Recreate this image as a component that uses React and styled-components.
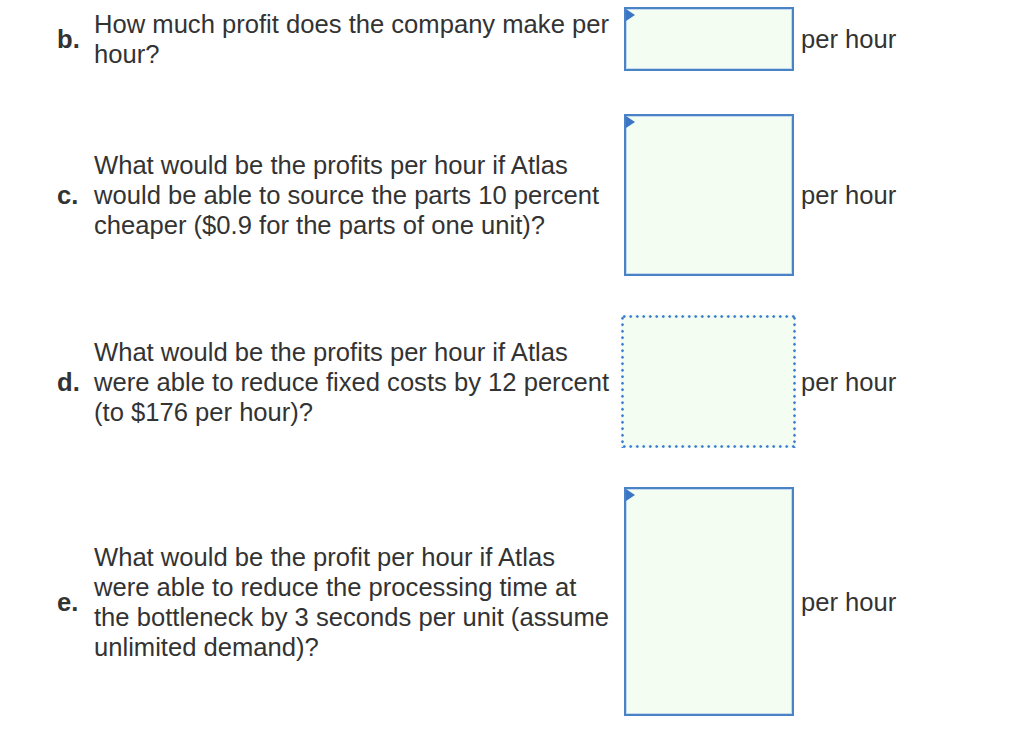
import React from 'react';
import styled, { createGlobalStyle } from 'styled-components';

// 기본 페이지 스타일
const GlobalStyle = createGlobalStyle`
  body {
    margin: 0;
    background: #ffffff;
    font-family: 'Liberation Sans', Arial, sans-serif;
    color: #333333;
  }
`;

// 문제 목록 전체
const List = styled.div`
  display: flex;
  flex-direction: column;
  gap: 39px;
  padding: 7px 0 0 57px;
`;

// 한 문제 줄
const Row = styled.div`
  display: flex;
  align-items: center;
  margin-bottom: ${(p) => p.$extra || 0}px;
`;

// b. c. 같은 번호
const Label = styled.div`
  width: 37px;
  flex-shrink: 0;
  font-size: 25.6px;
  font-weight: bold;
  line-height: 30px;
`;

// 질문 본문
const Question = styled.div`
  width: 522px;
  flex-shrink: 0;
  font-size: 25.6px;
  line-height: 30px;
`;

// 입력 칸을 담는 셀
const BoxCell = styled.div`
  width: 172px;
  flex-shrink: 0;
  display: flex;
  padding-left: 8px;
`;

// 점선 테두리 (포커스된 칸)
const dots = '#3a7bd0';
const dottedEdge = `
  background-color: #f3fdf2;
  background-image:
    radial-gradient(circle, ${dots} 1.1px, transparent 1.5px),
    radial-gradient(circle, ${dots} 1.1px, transparent 1.5px),
    radial-gradient(circle, ${dots} 1.1px, transparent 1.5px),
    radial-gradient(circle, ${dots} 1.1px, transparent 1.5px);
  background-size: 6.5px 3px, 6.5px 3px, 3px 6.5px, 3px 6.5px;
  background-position: 0 0, 0 100%, 0 0, 100% 0;
  background-repeat: repeat-x, repeat-x, repeat-y, repeat-y;
`;

// 답 입력 칸
const AnswerBox = styled.div`
  position: relative;
  box-sizing: border-box;
  width: ${(p) => (p.$focused ? 175 : 170)}px;
  height: ${(p) => p.$h}px;
  margin-left: ${(p) => (p.$focused ? -3 : 0)}px;
  background: #f3fdf2;
  border: 2px solid #4a82c6;
  box-shadow: inset 0 0 0 1px #c4d8ee;
  ${(p) => p.$focused && `border: none; box-shadow: none; ${dottedEdge}`}
`;

// 왼쪽 위 파란 삼각형 표시
const Marker = styled.span`
  position: absolute;
  top: 0;
  left: 0;
  width: 0;
  height: 0;
  border-left: 9px solid #3a76c4;
  border-top: 6px solid transparent;
  border-bottom: 6px solid transparent;
`;

// 단위 텍스트
const Unit = styled.div`
  margin-left: 5px;
  font-size: 25.6px;
  line-height: 30px;
  white-space: nowrap;
`;

const questions = [
  { id: 'b.', text: 'How much profit does the company make per hour?', h: 64, extra: 4 },
  {
    id: 'c.',
    text: 'What would be the profits per hour if Atlas would be able to source the parts 10 percent cheaper ($0.9 for the parts of one unit)?',
    h: 162,
  },
  {
    id: 'd.',
    text: 'What would be the profits per hour if Atlas were able to reduce fixed costs by 12 percent (to $176 per hour)?',
    h: 133,
    focused: true,
  },
  {
    id: 'e.',
    text: 'What would be the profit per hour if Atlas were able to reduce the processing time at the bottleneck by 3 seconds per unit (assume unlimited demand)?',
    h: 229,
  },
];

const App = () => {
  return (
    <>
      <GlobalStyle />
      <List>
        {questions.map((q) => (
          <Row key={q.id} $extra={q.extra}>
            <Label>{q.id}</Label>
            <Question>{q.text}</Question>
            <BoxCell>
              <AnswerBox $h={q.h} $focused={q.focused}>
                {!q.focused && <Marker />}
              </AnswerBox>
            </BoxCell>
            <Unit>per hour</Unit>
          </Row>
        ))}
      </List>
    </>
  );
};

export default App;
